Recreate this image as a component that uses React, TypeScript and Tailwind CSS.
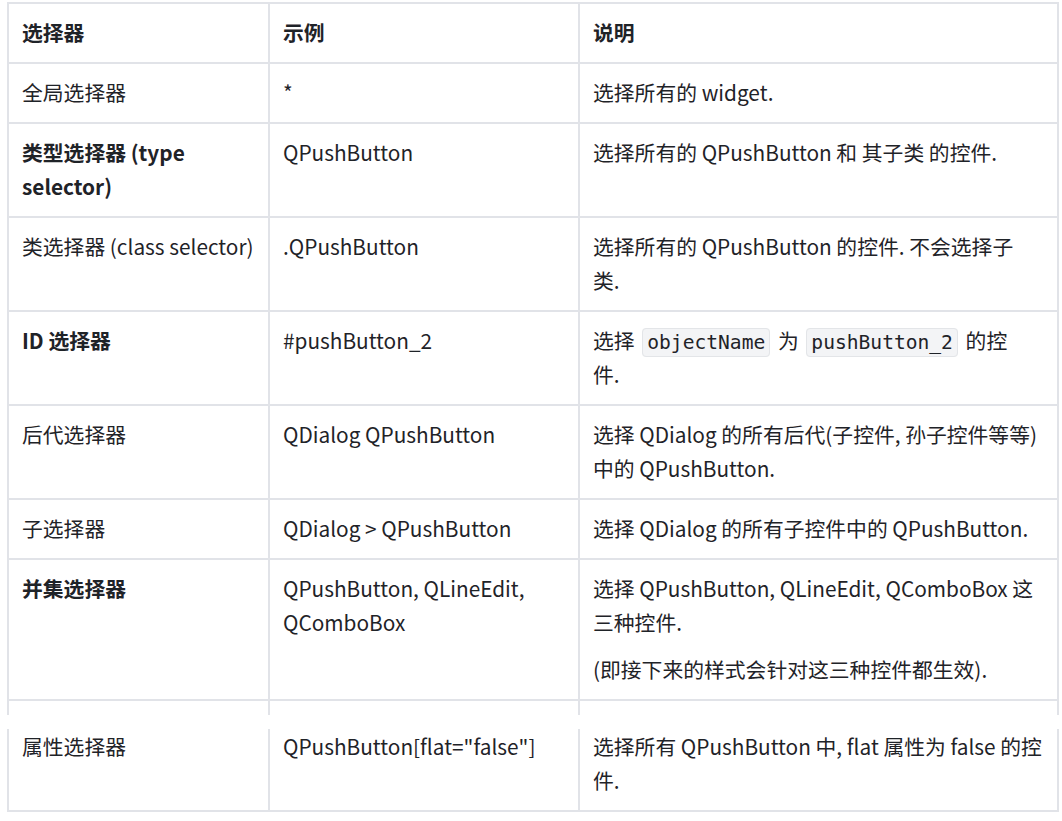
import type { ReactNode } from 'react'

type Row = {
  name: ReactNode
  example: ReactNode
  desc: ReactNode
}

const Code = ({ children }: { children: ReactNode }) => (
  <code className="mx-[3px] rounded-[4px] border border-[#e3e5e8] bg-[#f3f4f6] px-[4px] py-[2px] font-['DejaVu_Sans_Mono',monospace] text-[19.6px] leading-[20px] text-[#1f2328]">
    {children}
  </code>
)

const rows: Row[] = [
  { name: '全局选择器', example: '*', desc: '选择所有的 widget.' },
  {
    name: <strong>类型选择器 (type selector)</strong>,
    example: 'QPushButton',
    desc: '选择所有的 QPushButton 和 其子类 的控件.',
  },
  {
    name: '类选择器 (class selector)',
    example: '.QPushButton',
    desc: (
      <>
        选择所有的 QPushButton 的控件. 不会选择子
        <br />
        类.
      </>
    ),
  },
  {
    name: <strong>ID 选择器</strong>,
    example: '#pushButton_2',
    desc: (
      <>
        选择 <Code>objectName</Code> 为 <Code>pushButton_2</Code> 的控
        <br />
        件.
      </>
    ),
  },
  {
    name: '后代选择器',
    example: 'QDialog QPushButton',
    desc: '选择 QDialog 的所有后代(子控件, 孙子控件等等)中的 QPushButton.',
  },
  {
    name: '子选择器',
    example: 'QDialog > QPushButton',
    desc: '选择 QDialog 的所有子控件中的 QPushButton.',
  },
  {
    name: <strong>并集选择器</strong>,
    example: 'QPushButton, QLineEdit, QComboBox',
    desc: (
      <>
        <p>选择 QPushButton, QLineEdit, QComboBox 这三种控件.</p>
        <p className="mt-[13px]">(即接下来的样式会针对这三种控件都生效).</p>
      </>
    ),
  },
]

const cols = 'grid grid-cols-[261px_310px_479px]'
const line = 'border-[#e1e3e8]'
const cell = `border-r-2 border-b-2 ${line} px-[13px] pt-[11px] pb-[13px]`
const lastCell = `border-r-2 border-b-2 ${line} px-[13px] pb-[13px]`

export default function App() {
  return (
    <div className="min-h-screen bg-white pl-[7px] pt-[2px] font-['Noto_Sans_CJK_SC','Noto_Sans',sans-serif] text-[20.8px] leading-[34px] text-[#1f2328]">
      <div className="w-[1052px]">
        <div className={`${cols} border-l-2 border-t-2 ${line} font-bold`}>
          <div className={cell}>选择器</div>
          <div className={cell}>示例</div>
          <div className={cell}>说明</div>
        </div>

        {rows.map((row, i) => (
          <div key={i} className={`${cols} border-l-2 ${line}`}>
            <div className={cell}>{row.name}</div>
            <div className={cell}>{row.example}</div>
            <div className={cell}>{row.desc}</div>
          </div>
        ))}

        {/* row cut by a page break */}
        <div className={`${cols} h-[14px] border-l-2 ${line}`}>
          <div className={`border-r-2 ${line}`} />
          <div className={`border-r-2 ${line}`} />
          <div className={`border-r-2 ${line}`} />
        </div>
        <div className="h-[14px]" />
        <div className={`${cols} border-l-2 ${line}`}>
          <div className={lastCell}>属性选择器</div>
          <div className={lastCell}>QPushButton[flat="false"]</div>
          <div className={lastCell}>
            选择所有 QPushButton 中, flat 属性为 false 的控件.
          </div>
        </div>
      </div>
    </div>
  )
}
